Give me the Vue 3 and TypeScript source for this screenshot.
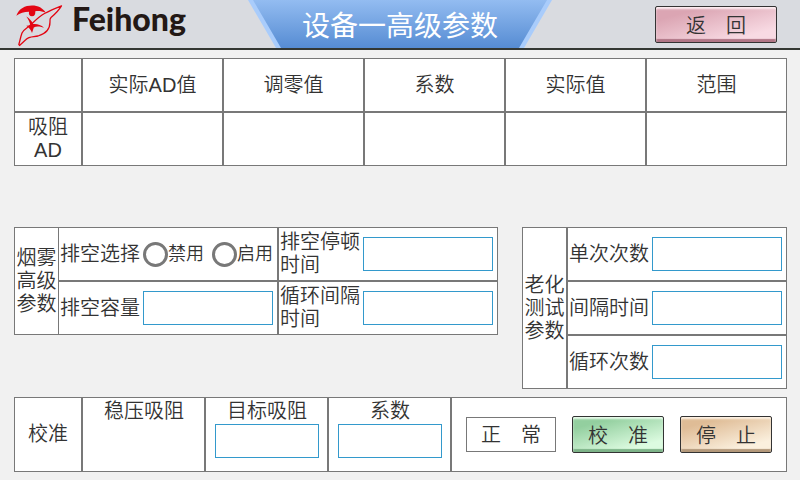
<script setup lang="ts">
import { reactive, ref } from 'vue'

interface Field {
  id: string
  label: string
}

const columns: string[] = ['实际AD值', '调零值', '系数', '实际值', '范围']

const agingFields: Field[] = [
  { id: 'single', label: '单次次数' },
  { id: 'interval', label: '间隔时间' },
  { id: 'cycles', label: '循环次数' },
]

const calibrationFields: Field[] = [
  { id: 'target', label: '目标吸阻' },
  { id: 'factor', label: '系数' },
]

const values = reactive<Record<string, string>>({
  volume: '',
  pause: '',
  loop: '',
  single: '',
  interval: '',
  cycles: '',
  target: '',
  factor: '',
})
const purge = ref<string>('')
</script>

<template>
  <div class="page">
    <header class="header">
      <div class="brand">
        <svg class="bird" viewBox="0 0 48 42" aria-hidden="true">
          <path d="M0.300 10.700C3 3.500 9 0.500 16 0.500C22 0.500 27 3 29.800 7.800C26 6 22.500 5.700 19.300 6.200C19.500 9.500 18.500 11.200 16 11.200C13.500 11.200 12.500 9.500 13 6.700C8 6.700 4 8 0.300 10.700Z" fill="#e30613" />
          <path d="M10.300 11.500C13.500 13.500 16 16 17 19C20.500 18.500 25 19.500 28 22.700C23.500 21 20 21 17.800 22.500L16 28C15.300 25 13 22.500 10.300 20.700L14.300 20.500C14 17.500 12.500 14.500 10.300 11.500Z" fill="#e30613" />
          <path d="M45.500 0.800C40 3 34 5.500 28.500 8.500C22 12 17.500 17.500 14 20.500C11 23 7.500 24.500 6 28C4.500 32 4 36 2.800 39.500L3.500 40.500L10 34.500C13 31 17 32 22 31C29 29 34 24 34 17C34 15.500 33.500 14 35 12.500C39 9 43 5 45.500 0.800Z" fill="none" stroke="#e30613" stroke-width="1.300" stroke-linejoin="round" />
        </svg>
        <span class="wordmark">Feihong</span>
      </div>
      <h1 class="title">设备一高级参数</h1>
      <button type="button" class="btn btn-back">返　回</button>
    </header>

    <main class="main">
      <table class="grid readings">
        <thead>
          <tr>
            <td class="side"></td>
            <th v-for="name in columns" :key="name" scope="col">{{ name }}</th>
          </tr>
        </thead>
        <tbody>
          <tr>
            <th class="side" scope="row">吸阻<br />AD</th>
            <td v-for="name in columns" :key="name"></td>
          </tr>
        </tbody>
      </table>

      <div class="middle">
        <table class="grid smoke">
          <tbody>
            <tr>
              <th class="group open" rowspan="2" scope="rowgroup">烟雾高级参数</th>
              <td>
                <div class="field" role="radiogroup" aria-labelledby="purge-label">
                  <span id="purge-label" class="caption">排空选择</span>
                  <div class="radios">
                    <label class="radio"><input v-model="purge" type="radio" name="purge" value="off" />禁用</label>
                    <label class="radio"><input v-model="purge" type="radio" name="purge" value="on" />启用</label>
                  </div>
                </div>
              </td>
              <td>
                <div class="field">
                  <label class="caption" for="pause">排空停顿时间</label>
                  <input id="pause" v-model="values.pause" class="box" type="text" />
                </div>
              </td>
            </tr>
            <tr>
              <td>
                <div class="field">
                  <label class="caption" for="volume">排空容量</label>
                  <input id="volume" v-model="values.volume" class="box" type="text" />
                </div>
              </td>
              <td>
                <div class="field">
                  <label class="caption" for="loop">循环间隔时间</label>
                  <input id="loop" v-model="values.loop" class="box" type="text" />
                </div>
              </td>
            </tr>
          </tbody>
        </table>

        <table class="grid aging">
          <tbody>
            <tr v-for="(field, index) in agingFields" :key="field.id">
              <th v-if="index === 0" class="group" :rowspan="agingFields.length" scope="rowgroup">老化测试参数</th>
              <td>
                <div class="field">
                  <label class="caption" :for="field.id">{{ field.label }}</label>
                  <input :id="field.id" v-model="values[field.id]" class="box" type="text" />
                </div>
              </td>
            </tr>
          </tbody>
        </table>
      </div>

      <section class="calibration">
        <h2 class="cell name">校准</h2>
        <div class="cell stack">稳压吸阻</div>
        <div v-for="field in calibrationFields" :key="field.id" class="cell stack">
          <label :for="field.id">{{ field.label }}</label>
          <input :id="field.id" v-model="values[field.id]" class="box" type="text" />
        </div>
        <div class="cell actions">
          <output class="status">正　常</output>
          <button type="button" class="btn btn-start">校　准</button>
          <button type="button" class="btn btn-stop">停　止</button>
        </div>
      </section>
    </main>
  </div>
</template>

<style>
body {
  margin: 0;
  background: #f1f1f1;
}
</style>

<style scoped>
.page,
.page * {
  box-sizing: border-box;
}

.page {
  color: #333;
  font: 350 20px/23px "Liberation Sans", "Noto Sans CJK SC", sans-serif;
}

.header {
  display: grid;
  grid-template-columns: 1fr 304px 1fr;
  height: 50px;
  border-bottom: 2px solid #333733;
  background: #d9dbe0;
}

.brand {
  display: flex;
  align-items: flex-start;
  gap: 8px;
  padding: 5px 0 0 16px;
}

.bird {
  width: 48px;
  height: 42px;
}

.wordmark {
  color: #231815;
  font: 900 32px/28px Lato, sans-serif;
}

.title {
  position: relative;
  z-index: 0;
  margin: 0;
  background: #a9ccfb;
  clip-path: polygon(0 0, 100% 0, 276px 100%, 28px 100%);
  color: #fff;
  font: 400 28px/48px "Noto Sans CJK SC", sans-serif;
  text-align: center;
}

.title::before {
  content: "";
  position: absolute;
  inset: 0;
  z-index: -1;
  background: linear-gradient(#93bcf1, #568cd3);
  clip-path: polygon(5px 0, 299px 0, 271px 100%, 33px 100%);
}

.btn {
  width: 92px;
  height: 37px;
  padding: 0;
  border: 1px solid #333;
  border-radius: 2px;
  color: #333;
  font: 350 20px/23px "Noto Sans CJK SC", sans-serif;
}

.btn-back {
  justify-self: end;
  width: 122px;
  margin: 6px 23px 0 0;
  background: linear-gradient(165deg, #dba5b3 20%, #f8dae3 80%);
  box-shadow: inset 0 2px 2px #fdeef2, inset 0 -3px 1px #b07585;
}

.btn-start {
  background: linear-gradient(165deg, #93cf9f 20%, #dcfbe0 80%);
  box-shadow: inset 0 2px 2px #e8fbeb, inset 0 -3px 1px #7db388;
}

.btn-stop {
  background: linear-gradient(165deg, #dfbc96 20%, #fbf0de 80%);
  box-shadow: inset 0 2px 2px #fdf2e4, inset 0 -3px 1px #b3987a;
}

.main {
  padding: 8px 13px 8px 14px;
}

.grid {
  width: 100%;
  border: 0;
  border-spacing: 0;
  table-layout: fixed;
  background: #fff;
}

.grid th,
.grid td {
  height: 54px;
  padding: 0;
  border: 1px solid #787878;
  font-weight: 350;
  text-align: center;
}

.grid .side {
  width: 68px;
}

.grid .group {
  width: 45px;
  padding: 0 1px;
}

.grid .open {
  width: 44px;
  border-right: 0;
}

.middle {
  display: grid;
  grid-template-columns: 484fr 265fr;
  align-items: start;
  gap: 24px;
  margin: 61px 0 8px;
}

.field {
  display: flex;
  align-items: center;
  gap: 3px;
  padding: 0 4px 0 1px;
  text-align: left;
}

.caption {
  flex: 0 0 80px;
}

.box {
  flex: 1;
  width: 100%;
  min-width: 0;
  height: 34px;
  padding: 0 4px;
  border: 1px solid #39c;
  border-radius: 0;
  background: #fff;
  color: #333;
  font: inherit;
}

.radios {
  display: flex;
  gap: 8px;
}

.radio {
  display: flex;
  align-items: center;
  font-size: 18px;
}

.radio input {
  appearance: none;
  width: 25px;
  height: 25px;
  margin: 0;
  border: 3px solid #787878;
  border-radius: 50%;
  background: #fff;
}

.radio input:checked {
  background: radial-gradient(#39c 50%, #fff 55%);
}

.calibration {
  display: grid;
  grid-template-columns: 68px 123fr 123fr 123fr 336fr;
  height: 75px;
  background: #fff;
}

.cell {
  border: 1px solid #787878;
}

.name {
  display: flex;
  align-items: center;
  justify-content: center;
  margin: 0;
  font-size: 20px;
  font-weight: 350;
}

.stack {
  display: flex;
  flex-direction: column;
  align-items: center;
  padding: 0 8px 0 9px;
  line-height: 26px;
}

.stack .box {
  flex: none;
}

.actions {
  display: flex;
  align-items: center;
  justify-content: flex-end;
  gap: 16px;
  padding: 0 14px;
}

.status {
  width: 90px;
  height: 35px;
  border: 1px solid #787878;
  line-height: 35px;
  text-align: center;
}
</style>
